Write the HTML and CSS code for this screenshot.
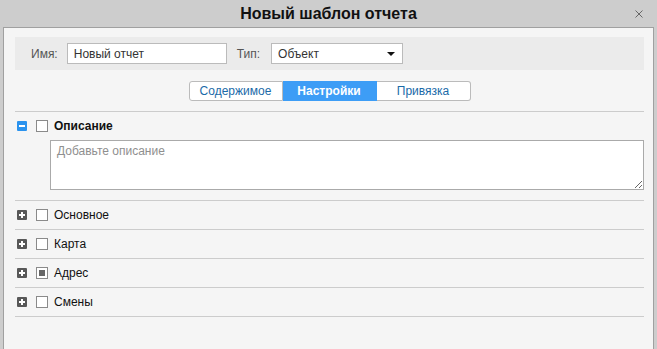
FILE: index.html
```html
<!DOCTYPE html>
<html lang="ru">

<head>
  <meta charset="UTF-8">
  <meta name="viewport" content="width=device-width, initial-scale=1.0">
  <title>Новый шаблон отчета</title>
  <link rel="stylesheet" href="styles.css">
</head>

<body>
  <div class="titlebar">
    <span></span>
    <h1>Новый шаблон отчета</h1>
    <button class="close-btn" type="button" aria-label="Закрыть">
      <svg width="8" height="8" viewBox="0 0 8 8"><path d="M0.5 0.5 L7.5 7.5 M7.5 0.5 L0.5 7.5" stroke="#666" stroke-width="1" fill="none"/></svg>
    </button>
  </div>

  <div class="panel">
    <!-- Name and type -->
    <div class="head-row">
      <label for="name">Имя:</label>
      <input type="text" id="name" class="name-input" value="Новый отчет">
      <label for="type" class="type-label">Тип:</label>
      <div class="select" id="type">
        <span>Объект</span>
        <span class="caret"></span>
      </div>
    </div>

    <div class="tabs">
      <button type="button" class="tab">Содержимое</button>
      <button type="button" class="tab active">Настройки</button>
      <button type="button" class="tab">Привязка</button>
    </div>

    <div class="sections">
      <div class="section open">
        <div class="section-head">
          <span class="toggle minus"></span>
          <span class="check"></span>
          <span class="section-title">Описание</span>
        </div>
        <textarea class="desc" placeholder="Добавьте описание"></textarea>
      </div>
      <div class="section">
        <div class="section-head">
          <span class="toggle plus"></span>
          <span class="check"></span>
          <span class="section-title">Основное</span>
        </div>
      </div>
      <div class="section">
        <div class="section-head">
          <span class="toggle plus"></span>
          <span class="check"></span>
          <span class="section-title">Карта</span>
        </div>
      </div>
      <div class="section">
        <div class="section-head">
          <span class="toggle plus"></span>
          <span class="check partial"></span>
          <span class="section-title">Адрес</span>
        </div>
      </div>
      <div class="section">
        <div class="section-head">
          <span class="toggle plus"></span>
          <span class="check"></span>
          <span class="section-title">Смены</span>
        </div>
      </div>
    </div>
  </div>
</body>

</html>
```

FILE: styles.css
```css
* {
  box-sizing: border-box;
}

html,
body {
  height: 100%;
}

body {
  font-family: 'Liberation Sans', Arial, sans-serif;
  font-size: 12px;
  background-color: #cdcdcd;
  margin: 0;
  color: #222;
  display: flex;
  flex-direction: column;
  overflow: hidden;
}

.titlebar {
  height: 27px;
  display: grid;
  grid-template-columns: 1fr auto 1fr;
  align-items: center;
}

.titlebar h1 {
  margin: 0;
  font-size: 16px;
  font-weight: bold;
  color: #111;
  line-height: 27px;
}

.close-btn {
  justify-self: end;
  margin-right: 14px;
  margin-top: 1px;
  padding: 0;
  border: none;
  background: none;
  width: 8px;
  height: 8px;
  display: flex;
}

.panel {
  flex: 1;
  margin: 0 3px 0 3px;
  border: 1px solid #a0a0a0;
  border-bottom: none;
  background-color: #f5f5f5;
  padding: 9px 9px 0 11px;
}

.head-row {
  height: 33px;
  background-color: #ebebeb;
  display: flex;
  align-items: center;
  padding-left: 16px;
  color: #555;
}

.head-row label {
  margin-right: 9px;
}

.name-input,
.select {
  height: 21px;
  border: 1px solid #bbb;
  background-color: #fff;
  font-family: inherit;
  font-size: 12px;
  color: #333;
  padding: 0 6px;
}

.name-input {
  width: 160px;
  outline: none;
}

.type-label {
  margin-left: 10px;
}

.head-row .type-label {
  margin-right: 11px;
}

.select {
  width: 132px;
  display: flex;
  align-items: center;
  justify-content: space-between;
}

.caret {
  width: 0;
  height: 0;
  border-left: 4px solid transparent;
  border-right: 4px solid transparent;
  border-top: 4px solid #111;
  margin-right: 1px;
}

.tabs {
  display: flex;
  justify-content: center;
  margin-top: 11px;
  padding-bottom: 10px;
  border-bottom: 1px solid #ccc;
}

.tab {
  width: 94px;
  height: 20px;
  font-family: inherit;
  font-size: 12px;
  color: #1a6aa8;
  background-color: #fff;
  border: 1px solid #bbb;
  border-left: none;
  padding: 0;
  cursor: pointer;
}

.tab:first-child {
  border-left: 1px solid #bbb;
  border-radius: 3px 0 0 3px;
}

.tab:last-child {
  border-radius: 0 3px 3px 0;
}

.tab.active {
  background-color: #3d9df6;
  border-color: #3d9df6;
  color: #fff;
  font-weight: bold;
}

.section {
  border-bottom: 1px solid #ccc;
}

.section-head {
  height: 28px;
  display: flex;
  align-items: center;
  padding-left: 2px;
}

.toggle {
  width: 10px;
  height: 10px;
  border-radius: 1px;
  position: relative;
  margin-right: 9px;
}

.toggle.minus {
  background-color: #2b93ee;
}

.toggle.plus {
  background-color: #585858;
}

/* white bars of the +/- sign */
.toggle::before,
.toggle.plus::after {
  content: '';
  position: absolute;
  background-color: #fff;
  left: 2px;
  top: 4px;
  width: 6px;
  height: 2px;
}

.toggle.plus::after {
  left: 4px;
  top: 2px;
  width: 2px;
  height: 6px;
}

.check {
  width: 12px;
  height: 12px;
  border: 1px solid #8a8a8a;
  background-color: #fff;
  margin-right: 6px;
  display: flex;
  align-items: center;
  justify-content: center;
}

.check.partial::before {
  content: '';
  width: 6px;
  height: 6px;
  background-color: #666;
}

.section-title {
  color: #111;
}

.section.open .section-title {
  font-weight: bold;
}

.desc {
  display: block;
  margin: 0 0 10px 35px;
  width: calc(100% - 35px);
  height: 50px;
  border: 1px solid #aaa;
  background-color: #fff;
  font-family: inherit;
  font-size: 12px;
  padding: 3px 6px;
  resize: vertical;
  outline: none;
}

.desc::placeholder {
  color: #8f8f8f;
}
```
